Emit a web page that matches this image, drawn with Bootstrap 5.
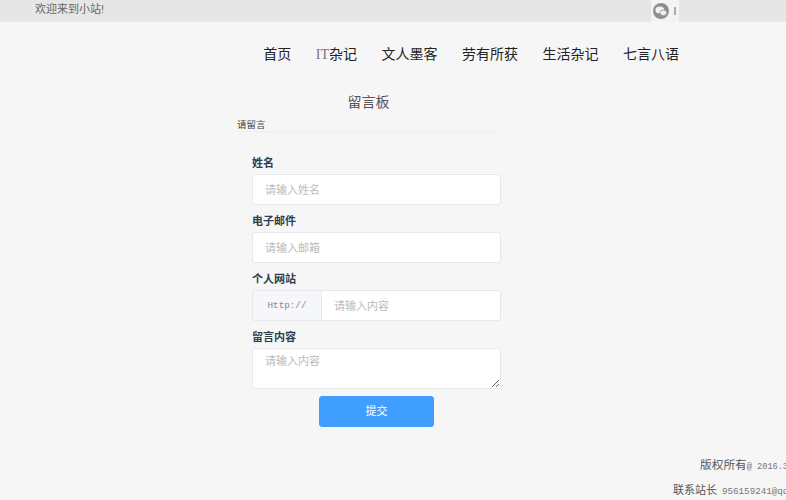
<!DOCTYPE html>
<html lang="zh">
<head>
  <meta charset="UTF-8" />
  <meta name="viewport" content="width=device-width, initial-scale=1" />
  <title>留言板</title>
  <link href="https://cdn.jsdelivr.net/npm/bootstrap@5.3.3/dist/css/bootstrap.min.css" rel="stylesheet" />
  <style>
    html, body { height: 500px; overflow: hidden; }
    body {
      font-family: "Liberation Sans", "Noto Sans CJK SC", sans-serif;
      background: #f6f6f6;
      color: #333;
      font-size: 11px;
    }
    .topbar {
      height: 22px;
      background: #e6e6e6;
      padding: 0 107px 0 35px;
      color: #666;
      line-height: 19px;
    }
    .wx-box {
      width: 28px;
      height: 22px;
      background: #f4f4f4;
      padding-left: 2px;
      gap: 5px;
    }
    .wx-bar { width: 2px; height: 8px; background: #aaa; }
    .main-nav {
      height: 65px;
      padding-right: 107px;
      gap: 24.5px;
      font-size: 14px;
      color: #222;
    }
    .main-nav a { color: #222; text-decoration: none; }
    .main-nav .latin { font-family: "Liberation Serif", serif; color: #777; }
    .board-title {
      width: 263px;
      margin-left: 237px;
    }
    .board-title h1 {
      font-size: 14px;
      font-weight: 400;
      color: #555;
      text-align: center;
      margin: 6px 0 7px;
      line-height: 18px;
    }
    .board-title p {
      font-size: 9.5px;
      line-height: 13px;
      margin: 0;
      border-bottom: 1px solid #eee;
      color: #444;
    }
    .msg-form { width: 249px; margin-left: 252px; padding-top: 23px; }
    .msg-form .form-label {
      font-size: 11px;
      font-weight: 700;
      color: #2c3e50;
      line-height: 16px;
      margin-bottom: 3px;
      display: block;
    }
    .msg-form .field { margin-bottom: 8px; }
    .msg-form .field-last { margin-bottom: 7px; }
    .msg-form .form-control {
      font-size: 11px;
      height: 31px;
      padding: 4px 12px;
      border-color: #e6e8ea;
      border-radius: 3px;
    }
    .msg-form .form-control::placeholder { color: #bbb; }
    .msg-form textarea.form-control { height: 41px; min-height: 41px; }
    .http-tag {
      width: 70px;
      justify-content: center;
      font-family: "Liberation Mono", monospace;
      font-size: 9.3px;
      color: #888;
      background: #f5f7fa;
      border-color: #e6e8ea;
      border-radius: 3px;
    }
    .send-btn {
      display: block;
      width: 115px;
      height: 31px;
      margin: 0 0 0 67px;
      padding: 0;
      font-size: 11px;
      background: #409eff;
      border-color: #409eff;
      border-radius: 3px;
    }
    .page-foot {
      white-space: nowrap;
      margin-top: 26px;
      color: #555;
      line-height: 23px;
    }
    .page-foot .mono { font-family: "Liberation Mono", monospace; color: #777; }
    .page-foot .foot-year { font-size: 8.6px; }
    .page-foot .foot-mail { font-size: 9.2px; margin-left: 2px; }
    .page-foot div:first-child { padding-left: 700px; font-size: 11.7px; }
    .page-foot div:last-child { padding-left: 673px; }
  </style>
</head>
<body>

  <!-- top bar -->
  <div class="topbar d-flex justify-content-between">
    <span>欢迎来到小站!</span>
    <div class="wx-box d-flex align-items-center">
      <svg width="16" height="16" viewBox="0 0 16 16">
        <circle cx="8" cy="8" r="8" fill="#8f8f8f"/>
        <ellipse cx="6.8" cy="7" rx="4.4" ry="3.5" fill="#f2f2f2"/>
        <ellipse cx="10.4" cy="9.8" rx="3.4" ry="2.8" fill="#f2f2f2" stroke="#8f8f8f" stroke-width=".8"/>
      </svg>
      <span class="wx-bar"></span>
    </div>
  </div>

  <!-- nav -->
  <nav class="main-nav d-flex justify-content-end align-items-center">
    <a href="#">首页</a>
    <a href="#"><span class="latin">IT</span>杂记</a>
    <a href="#">文人墨客</a>
    <a href="#">劳有所获</a>
    <a href="#">生活杂记</a>
    <a href="#">七言八语</a>
  </nav>

  <div class="board-title">
    <h1>留言板</h1>
    <p>请留言</p>
  </div>

  <form class="msg-form">
    <div class="field">
      <label class="form-label">姓名</label>
      <input type="text" class="form-control" placeholder="请输入姓名">
    </div>
    <div class="field">
      <label class="form-label">电子邮件</label>
      <input type="text" class="form-control" placeholder="请输入邮箱">
    </div>
    <div class="field">
      <label class="form-label">个人网站</label>
      <div class="input-group">
        <span class="input-group-text http-tag">Http://</span>
        <input type="text" class="form-control" placeholder="请输入内容">
      </div>
    </div>
    <div class="field field-last">
      <label class="form-label">留言内容</label>
      <textarea class="form-control" placeholder="请输入内容"></textarea>
    </div>
    <button type="button" class="btn btn-primary send-btn">提交</button>
  </form>

  <footer class="page-foot">
    <div>版权所有<span class="mono foot-year">@ 2016.3</span></div>
    <div>联系站长 <span class="mono foot-mail">956159241@qq.com</span></div>
  </footer>

  <script src="https://cdn.jsdelivr.net/npm/bootstrap@5.3.3/dist/js/bootstrap.bundle.min.js"></script>
</body>
</html>
